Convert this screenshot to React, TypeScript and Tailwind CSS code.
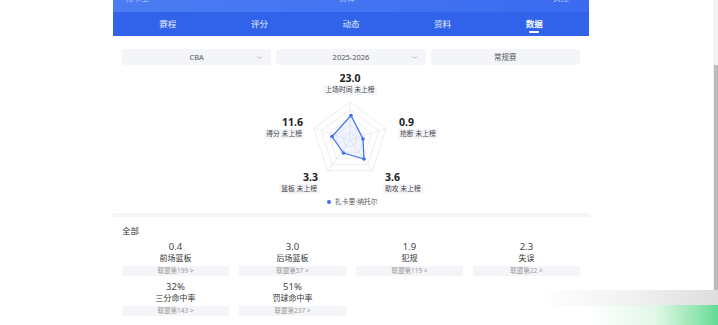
import { ChevronDown } from 'lucide-react';

const FONT = { fontFamily: '"Noto Sans", "Noto Sans CJK SC", sans-serif' };

const tabs = ['赛程', '评分', '动态', '资料', '数据'];

const stats = [
    { value: '0.4', label: '前场篮板', rank: '联盟第199' },
    { value: '3.0', label: '后场篮板', rank: '联盟第57' },
    { value: '1.9', label: '犯规', rank: '联盟第119' },
    { value: '2.3', label: '失误', rank: '联盟第22' },
    { value: '32%', label: '三分命中率', rank: '联盟第143' },
    { value: '51%', label: '罚球命中率', rank: '联盟第237' },
];

// radar geometry, local coords of the chart box
const CX = 237;
const CY = 72;
const R = 38;

const vertex = (i: number, r: number) => {
    const a = (-90 + i * 72) * (Math.PI / 180);
    return [CX + r * Math.cos(a), CY + r * Math.sin(a)];
};

const ring = (r: number) =>
    [0, 1, 2, 3, 4].map((i) => vertex(i, r).join(',')).join(' ');

const RadarChart = () => {
    const data = [
        [238, 47.5],
        [250, 71],
        [251, 91],
        [230.5, 85],
        [219, 68.5],
    ];

    return (
        <div className="relative h-[145px]">
            <svg width="476" height="145" className="absolute left-0 top-0">
                {[38, 30.4, 22.8, 15.2, 7.6].map((r) => (
                    <polygon key={r} points={ring(r)} fill="none" stroke="#eceef2" strokeWidth="1" />
                ))}
                {[0, 1, 2, 3, 4].map((i) => {
                    const [x, y] = vertex(i, R);
                    return <line key={i} x1={CX} y1={CY} x2={x} y2={y} stroke="#eceef2" strokeWidth="1" />;
                })}
                <polygon
                    points={data.map((p) => p.join(',')).join(' ')}
                    fill="rgba(59,110,240,0.08)"
                    stroke="#3b6ef0"
                    strokeWidth="1.2"
                />
                {data.map(([x, y], i) => (
                    <circle key={i} cx={x} cy={y} r="1.8" fill="#3b6ef0" />
                ))}
            </svg>

            {/* top */}
            <div className="absolute left-[187px] top-[4px] w-[100px] flex flex-col items-center">
                <span className="text-[10.5px] leading-[13px] font-bold text-[#222]">23.0</span>
                <span className="px-[2px] bg-[#f5f6f9] text-[6.8px] leading-[10px] text-[#444]">上场时间 未上榜</span>
            </div>
            {/* left */}
            <div className="absolute left-[130px] top-[48px] w-[61px] flex flex-col items-end">
                <span className="text-[10.5px] leading-[13px] font-bold text-[#222] pr-[1px]">11.6</span>
                <span className="px-[2px] bg-[#f5f6f9] text-[6.8px] leading-[10px] text-[#444]">得分 未上榜</span>
            </div>
            {/* right */}
            <div className="absolute left-[285px] top-[48px] w-[70px] flex flex-col items-start">
                <span className="text-[10.5px] leading-[13px] font-bold text-[#222] pl-[1px]">0.9</span>
                <span className="px-[2px] bg-[#f5f6f9] text-[6.8px] leading-[10px] text-[#444]">抢断 未上榜</span>
            </div>
            {/* bottom left */}
            <div className="absolute left-[145px] top-[103px] w-[61px] flex flex-col items-end">
                <span className="text-[10.5px] leading-[13px] font-bold text-[#222] pr-[1px]">3.3</span>
                <span className="px-[2px] bg-[#f5f6f9] text-[6.8px] leading-[10px] text-[#444]">篮板 未上榜</span>
            </div>
            {/* bottom right */}
            <div className="absolute left-[270px] top-[103px] w-[70px] flex flex-col items-start">
                <span className="text-[10.5px] leading-[13px] font-bold text-[#222] pl-[2px]">3.6</span>
                <span className="px-[2px] bg-[#f5f6f9] text-[6.8px] leading-[10px] text-[#444]">助攻 未上榜</span>
            </div>
            {/* legend */}
            <div className="absolute left-[214px] top-[129px] flex items-center gap-[4px]">
                <span className="w-[4px] h-[4px] rounded-full bg-[#3b6ef0]" />
                <span className="text-[6.8px] leading-[10px] text-[#555]">扎卡里·纳托尔</span>
            </div>
        </div>
    );
};

export default function App() {
    return (
        <div className="relative w-[718px] h-[325px] overflow-hidden bg-white" style={FONT}>
            <div className="flex">
                <div className="w-[113px] shrink-0" />

                <div className="w-[476px] shrink-0 flex flex-col">
                    {/* HEADER */}
                    <div className="bg-[#3063ea]">
                        <div className="h-[12px] overflow-hidden bg-gradient-to-r from-[#4c7cf3] to-[#3a6bf0] flex items-start text-white/60 text-[8px] leading-[8px]">
                            <span className="ml-[12px] -mt-[6px]">扎卡里</span>
                            <span className="ml-[190px] -mt-[6px]">前锋</span>
                            <span className="ml-[198px] -mt-[6px]">关注</span>
                        </div>
                        <div className="h-[24px] px-[9px] grid grid-cols-5">
                            {tabs.map((t) => (
                                <div key={t} className="flex flex-col items-center justify-center relative">
                                    <span className={`text-[8.5px] leading-[10px] text-white ${t === '数据' ? 'font-bold' : 'text-white/90'}`}>
                                        {t}
                                    </span>
                                    {t === '数据' && (
                                        <span className="absolute bottom-[3px] w-[10px] h-[2px] bg-white rounded-full" />
                                    )}
                                </div>
                            ))}
                        </div>
                    </div>

                    {/* FILTERS */}
                    <div className="mt-[13px] px-[9px] grid grid-cols-3 gap-[5px]">
                        {['CBA', '2025-2026', '常规赛'].map((f, i) => (
                            <div key={f} className="h-[16px] rounded-[4px] bg-[#f3f5f9] relative flex items-center justify-center">
                                <span className="text-[7.5px] leading-[10px] text-[#555]">{f}</span>
                                {i < 2 && (
                                    <ChevronDown size={7} strokeWidth={2} className="absolute right-[8px] text-[#888]" />
                                )}
                            </div>
                        ))}
                    </div>

                    {/* RADAR */}
                    <div className="mt-[3px]">
                        <RadarChart />
                    </div>

                    <div className="h-[4px] bg-[#f4f5f7]" />

                    {/* ALL STATS */}
                    <div className="px-[9px] pt-[9px]">
                        <div className="text-[8.5px] leading-[10px] text-[#333]">全部</div>
                        <div className="mt-[5px] grid grid-cols-4 gap-x-[10px] gap-y-[5px]">
                            {stats.map((s) => (
                                <div key={s.label} className="flex flex-col items-center">
                                    <span className="text-[9.5px] leading-[11px] text-[#444]">{s.value}</span>
                                    <span className="text-[8px] leading-[11px] text-[#333]">{s.label}</span>
                                    <div className="mt-[3px] w-full h-[10px] bg-[#f4f5f8] flex items-center justify-center">
                                        <span className="text-[6.5px] leading-[8px] text-[#999]">{s.rank} &gt;</span>
                                    </div>
                                </div>
                            ))}
                        </div>
                    </div>
                </div>
            </div>

            {/* window chrome overlays */}
            <div className="absolute right-0 top-0 w-[5px] h-[325px] bg-[#f2f2f2]" />
            <div className="absolute right-0 top-[65px] w-[4px] h-[238px] bg-[#bdbdbd]" />
            <div className="absolute left-[540px] top-[290px] w-[178px] h-[16px] bg-gradient-to-r from-transparent via-[#f2f2f2] to-[#dedede]" />
            <div className="absolute left-[590px] top-[305px] w-[128px] h-[20px] bg-gradient-to-r from-transparent via-[#e2f8e9] to-[#5fdc94]" />
        </div>
    );
}
